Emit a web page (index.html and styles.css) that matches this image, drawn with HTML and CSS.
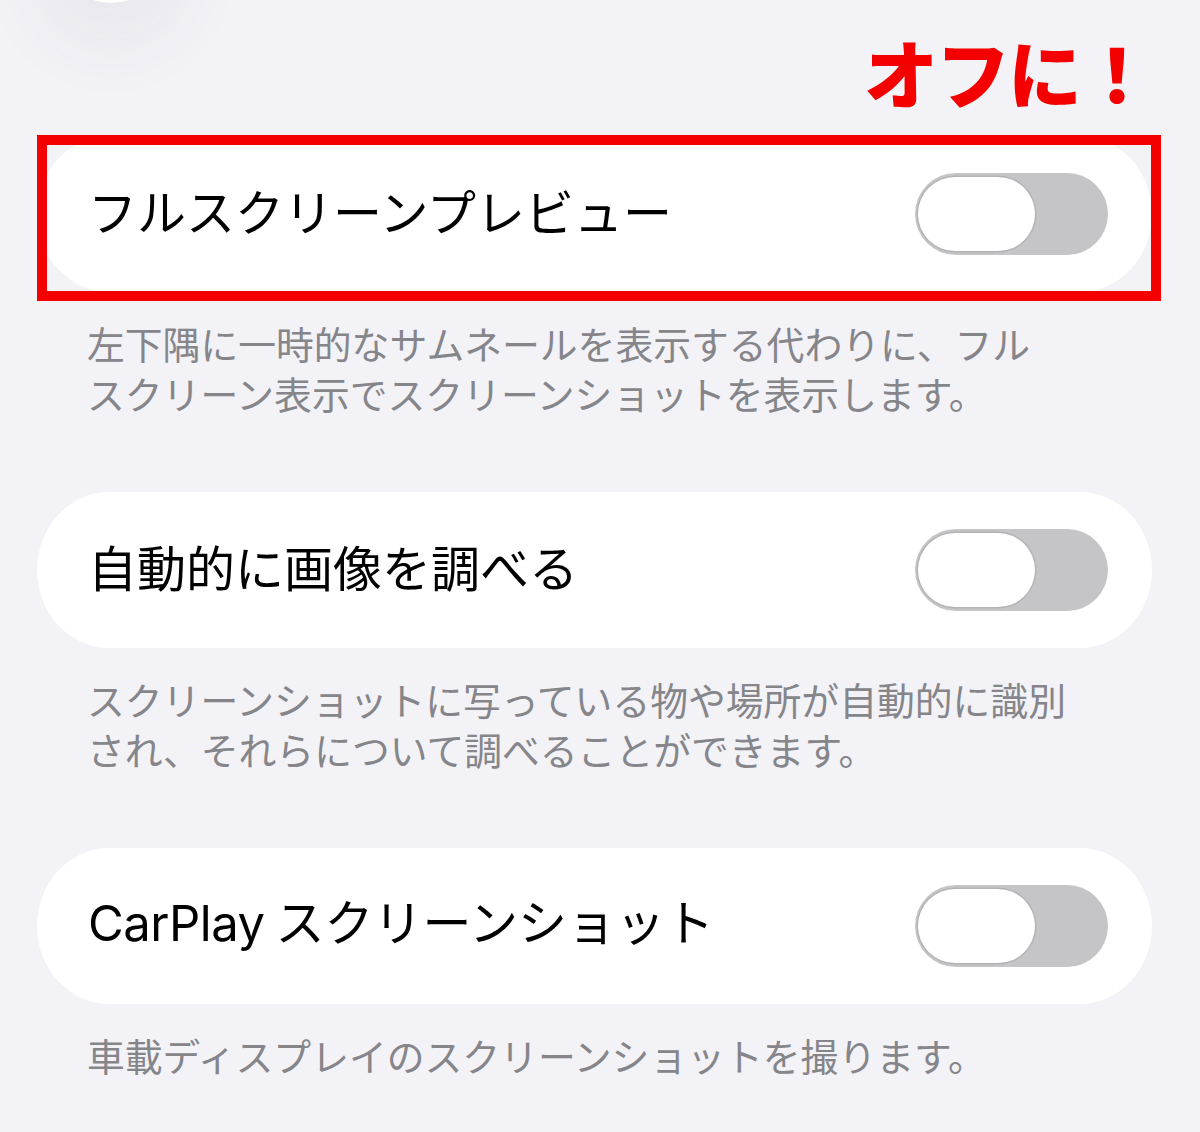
FILE: index.html
```html
<!DOCTYPE html>
<html lang="ja">
<head>
<meta charset="utf-8">
<title>スクリーンショット設定</title>
<link rel="stylesheet" href="styles.css">
</head>
<body>
<div class="page">
  <div class="float-button"></div>

  <div class="note">オフに！</div>

  <div class="card highlighted">
    <span class="label">フルスクリーンプレビュー</span>
    <span class="toggle"><span class="knob"></span></span>
  </div>
  <p class="desc">左下隅に一時的なサムネールを表示する代わりに、フル<br>スクリーン表示でスクリーンショットを表示します。</p>

  <div class="card">
    <span class="label">自動的に画像を調べる</span>
    <span class="toggle"><span class="knob"></span></span>
  </div>
  <p class="desc">スクリーンショットに写っている物や場所が自動的に識別<br>され、それらについて調べることができます。</p>

  <div class="card">
    <span class="label"><span class="latin">CarPlay</span> スクリーンショット</span>
    <span class="toggle"><span class="knob"></span></span>
  </div>
  <p class="desc">車載ディスプレイのスクリーンショットを撮ります。</p>
</div>
</body>
</html>
```

FILE: styles.css
```css
html, body {
  margin: 0;
  padding: 0;
}

body {
  background: #f2f2f7;
  font-family: "Noto Sans CJK JP", "Noto Sans", sans-serif;
  color: #000;
  overflow: hidden;
}

.page {
  position: relative;
  padding: 0 48px 0 37px;
  height: 1132px;
  box-sizing: border-box;
}

/* round button peeking in from above the list */
.float-button {
  position: absolute;
  left: 54px;
  top: -111px;
  width: 114px;
  height: 114px;
  border-radius: 50%;
  background: #ffffff;
  box-shadow: 0 24px 70px 20px rgba(60, 60, 80, 0.06);
}

.note {
  height: 136px;
  box-sizing: border-box;
  padding: 34px 0 0 0;
  text-align: right;
  font-size: 74px;
  line-height: 74px;
  font-weight: 900;
  letter-spacing: -2px;
  color: #f40000;
}

.card {
  position: relative;
  height: 156px;
  box-sizing: border-box;
  border-radius: 72px / 78px;
  background: #ffffff;
  display: flex;
  align-items: center;
  justify-content: space-between;
  padding: 0 44px 0 51px;
}

.highlighted::after {
  content: "";
  position: absolute;
  left: 0;
  right: -9px;
  top: -1px;
  bottom: -9px;
  border: 10px solid #f40000;
}

.label {
  font-size: 49px;
  line-height: 60px;
  font-weight: 400;
  white-space: nowrap;
  margin-bottom: 8px;
}

.latin {
  font-family: "Inter", "Noto Sans", sans-serif;
  letter-spacing: -0.5px;
}

.toggle {
  width: 193px;
  height: 82px;
  box-sizing: border-box;
  border-radius: 41px;
  background: #c5c5c7;
  padding: 4px 3px;
  display: flex;
  align-items: center;
}

.knob {
  width: 117px;
  height: 74px;
  border-radius: 37px;
  background: #ffffff;
  box-shadow: 0 0 0 1.5px #b4b4b7;
}

.desc {
  margin: 26px 0 74px;
  padding-left: 50px;
  font-size: 37.8px;
  line-height: 50px;
  color: #85858a;
  white-space: nowrap;
}
```
